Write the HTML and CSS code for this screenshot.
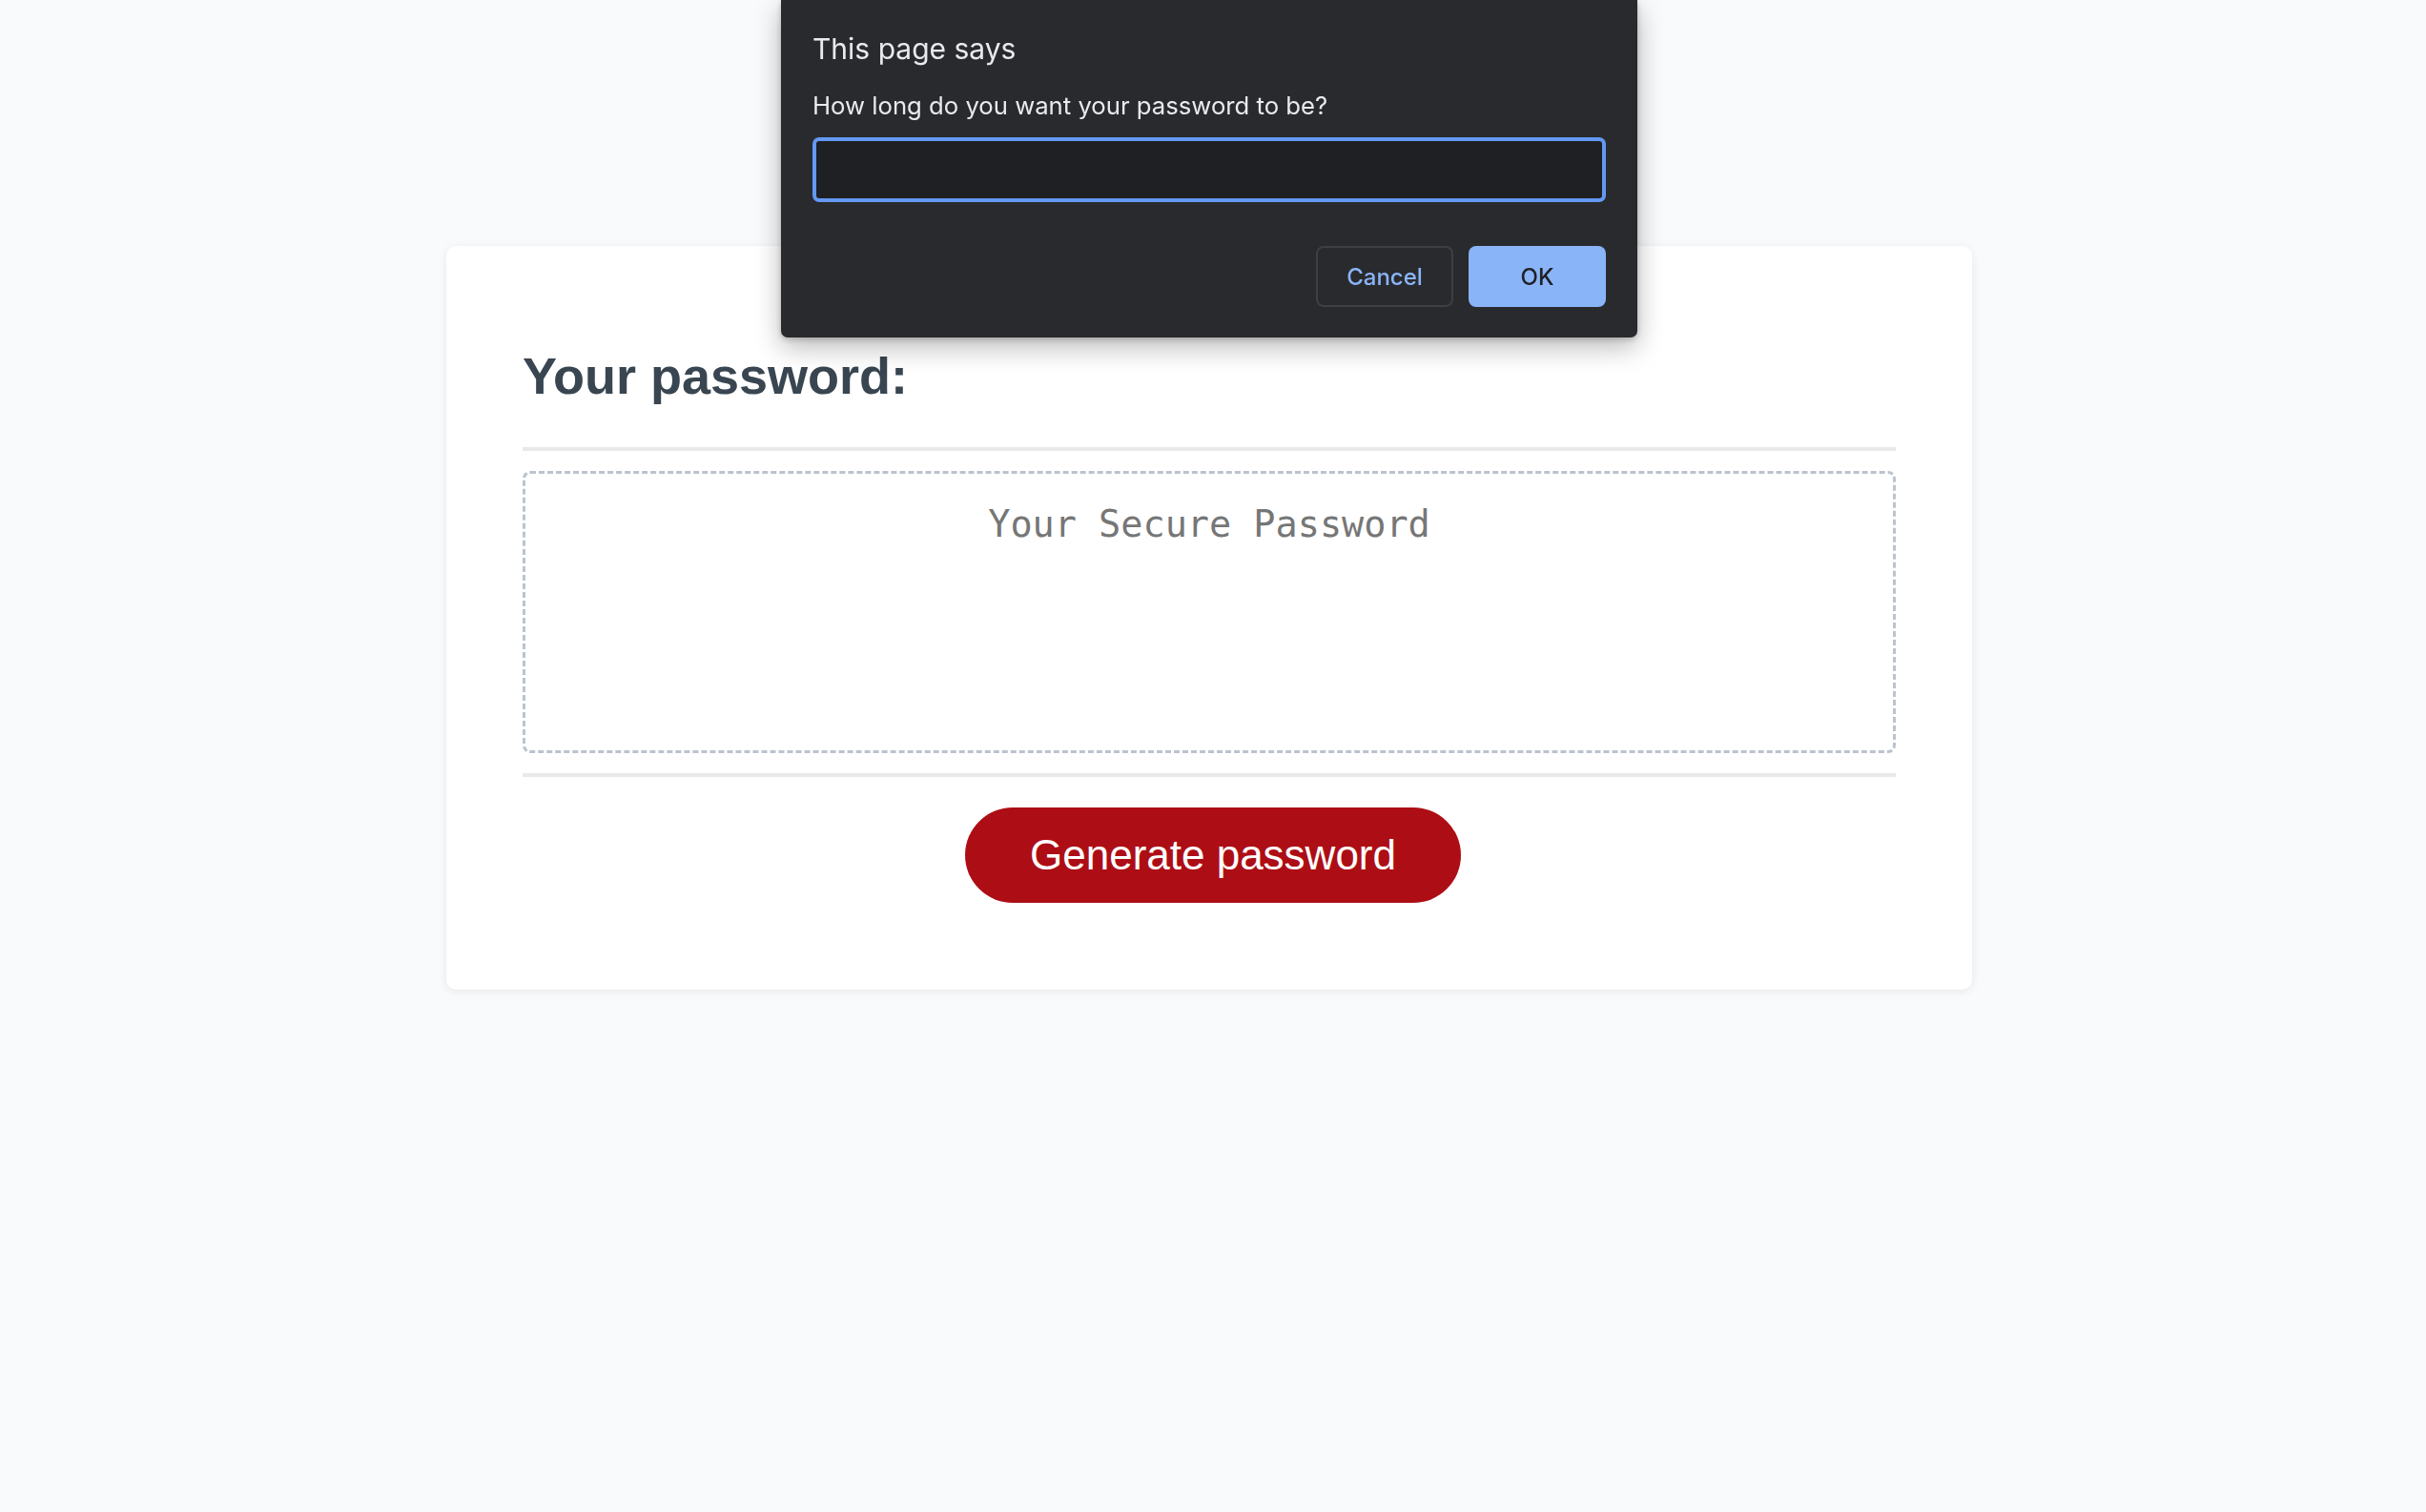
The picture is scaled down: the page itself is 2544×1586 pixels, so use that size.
FILE: index.html
```html
<!DOCTYPE html>
<html lang="en">
<head>
<meta charset="utf-8">
<title>Password Generator</title>
<link rel="stylesheet" href="styles.css">
</head>
<body>
  <div class="wrapper">
    <div class="card">
      <h2 class="card-title">Your password:</h2>
      <hr class="divider">
      <textarea class="password" readonly placeholder="Your Secure Password"></textarea>
      <hr class="divider divider-bottom">
      <div class="card-footer">
        <button class="btn-generate">Generate password</button>
      </div>
    </div>
  </div>

  <div class="prompt">
    <div class="prompt-title">This page says</div>
    <div class="prompt-message">How long do you want your password to be?</div>
    <div class="prompt-input"></div>
    <div class="prompt-actions">
      <button class="prompt-btn prompt-cancel">Cancel</button>
      <button class="prompt-btn prompt-ok">OK</button>
    </div>
  </div>
</body>
</html>
```

FILE: styles.css
```css
html, body {
  margin: 0;
  padding: 0;
}

body {
  background: #f9fafb;
  font-family: "Liberation Sans", Arial, sans-serif;
  min-height: 1586px;
}

.wrapper {
  padding: 258px 8px 0 0;
}

.card {
  width: 1600px;
  box-sizing: border-box;
  margin: 0 auto;
  background: #ffffff;
  border-radius: 10px;
  box-shadow: 0 2px 10px rgba(0, 0, 0, 0.08);
  padding: 105px 80px 91px;
}

.card-title {
  margin: 0;
  font-size: 54px;
  line-height: 62px;
  font-weight: 700;
  color: #394651;
}

.divider {
  border: none;
  height: 4px;
  background: #e8e9eb;
  margin: 44px 0 21px;
}

.divider-bottom {
  margin: 21px 0 32px;
}

.password {
  display: block;
  width: 100%;
  height: 296px;
  box-sizing: border-box;
  border: 3px dashed #bcc3cc;
  border-radius: 8px;
  padding: 30px 20px 0;
  margin: 0;
  resize: none;
  outline: none;
  text-align: center;
  font-family: "DejaVu Sans Mono", monospace;
  font-size: 38.5px;
  color: #333;
  background: #fff;
}

.password::placeholder {
  color: #767676;
  opacity: 1;
}

.card-footer {
  display: flex;
  justify-content: center;
  padding-left: 8px;
}

.btn-generate {
  height: 100px;
  padding: 0 68px;
  border: none;
  border-radius: 50px;
  background: #ad0e15;
  color: #ffffff;
  font-family: "Liberation Sans", Arial, sans-serif;
  font-size: 44px;
  cursor: pointer;
}

/* Browser prompt dialog */
.prompt {
  position: fixed;
  top: 0;
  left: calc(50% - 453px);
  width: 898px;
  box-sizing: border-box;
  padding: 33px 33px 32px;
  background: #292a2d;
  border-radius: 0 0 7px 7px;
  box-shadow: 0 10px 28px rgba(0, 0, 0, 0.28), 0 2px 6px rgba(0, 0, 0, 0.2);
  font-family: Inter, "Noto Sans", sans-serif;
  color: #e8eaed;
}

.prompt-title {
  font-size: 30px;
  line-height: 36px;
}

.prompt-message {
  margin-top: 27px;
  font-size: 25.7px;
  line-height: 30px;
}

.prompt-input {
  margin-top: 18px;
  height: 68px;
  box-sizing: border-box;
  border: 4px solid #6398f3;
  border-radius: 7px;
  background: #1f2023;
}

.prompt-actions {
  margin-top: 46px;
  display: flex;
  justify-content: flex-end;
  gap: 16px;
}

.prompt-btn {
  width: 144px;
  height: 64px;
  box-sizing: border-box;
  border-radius: 8px;
  font-family: Inter, "Noto Sans", sans-serif;
  font-size: 24px;
  font-weight: 500;
  cursor: pointer;
}

.prompt-cancel {
  background: transparent;
  border: 2px solid #3c3f44;
  color: #8ab4f8;
}

.prompt-ok {
  background: #8ab4f8;
  border: none;
  color: #202124;
}
```
